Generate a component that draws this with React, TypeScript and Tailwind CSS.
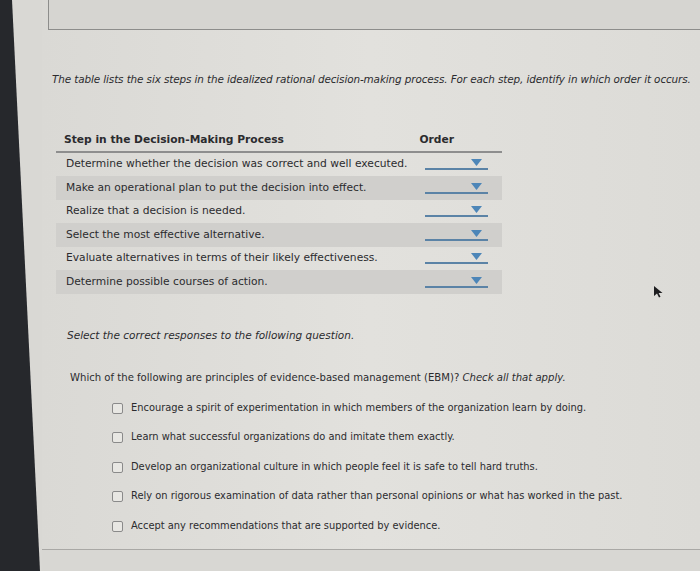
import React from 'react';

const STEPS = [
  'Determine whether the decision was correct and well executed.',
  'Make an operational plan to put the decision into effect.',
  'Realize that a decision is needed.',
  'Select the most effective alternative.',
  'Evaluate alternatives in terms of their likely effectiveness.',
  'Determine possible courses of action.',
];

const OPTIONS = [
  'Encourage a spirit of experimentation in which members of the organization learn by doing.',
  'Learn what successful organizations do and imitate them exactly.',
  'Develop an organizational culture in which people feel it is safe to tell hard truths.',
  'Rely on rigorous examination of data rather than personal opinions or what has worked in the past.',
  'Accept any recommendations that are supported by evidence.',
];

function Dropdown() {
  return (
    <div className="w-[63px] h-[12px] border-b-2 border-[#5b83a6] flex justify-end items-start pr-[6px]">
      <svg width="11" height="7" viewBox="0 0 11 7" className="mt-[1px]">
        <polygon points="0,0 11,0 5.5,7" fill="#4d86b8" />
      </svg>
    </div>
  );
}

export default function App() {
  return (
    <div className="relative w-[700px] h-[571px] flex bg-[#dcdbd7] overflow-hidden text-[#2b2b2e]" style={{ fontFamily: '"DejaVu Sans", Verdana, sans-serif' }}>
      {/* monitor bezel */}
      <div className="w-[42px] shrink-0 bg-[#d9d8d4]">
        <div className="h-full w-full bg-[#26282c] [clip-path:polygon(0_0,12px_0,40px_100%,0_100%)]" />
      </div>

      <div className="flex-1 flex flex-col bg-[linear-gradient(to_right,#dad9d5,#e2e1dd_50%,#dcdbd7)]">
        <div className="ml-[6px] h-[30px] border-l border-b border-[#8d8d8b] bg-[#d6d5d1]" />

        <p className="mt-[42px] ml-[10px] text-[10.4px] italic tracking-[-0.1px] whitespace-nowrap">
          The table lists the six steps in the idealized rational decision-making process. For each step, identify in which order it occurs.
        </p>

        {/* ordering table */}
        <div className="mt-[44px] ml-[14px] w-[446px] text-[10.7px]">
          <div className="flex items-end justify-between px-[8px] pb-[3px] border-b-2 border-[#8e8e8e] font-bold">
            <span>Step in the Decision-Making Process</span>
            <span className="mr-[40px]">Order</span>
          </div>
          {STEPS.map((s, i) => (
            <div key={s} className={`h-[23.5px] flex items-center justify-between pl-[10px] pr-[14px] ${i % 2 === 1 ? 'bg-[#d0cfcc]' : ''}`}>
              <span>{s}</span>
              <Dropdown />
            </div>
          ))}
        </div>

        <p className="mt-[34px] ml-[25px] text-[10.5px] italic">Select the correct responses to the following question.</p>

        <p className="mt-[27px] ml-[28px] text-[10.1px]">
          Which of the following are principles of evidence-based management (EBM)? <i>Check all that apply.</i>
        </p>

        <div className="mt-[16px] ml-[70px] flex flex-col gap-[16.5px] text-[9.9px]">
          {OPTIONS.map(o => (
            <label key={o} className="flex items-center gap-[8px] h-[13px]">
              <span className="w-[11px] h-[11px] rounded-[2px] border border-[#8a8a8a] bg-[#e8e7e3] shrink-0" />
              <span>{o}</span>
            </label>
          ))}
        </div>

        <div className="mt-[16px] border-b border-[#a9a8a5]" />
        <div className="flex-1 bg-[#d8d7d3]" />
      </div>

      {/* mouse pointer */}
      <svg width="10" height="12" viewBox="0 0 10 12" className="absolute left-[654px] top-[286px]">
        <polygon points="0,0 0,10 3,7.5 5,11.5 6.5,10.8 4.6,7 8.5,7" fill="#1e1e20" />
      </svg>
    </div>
  );
}
